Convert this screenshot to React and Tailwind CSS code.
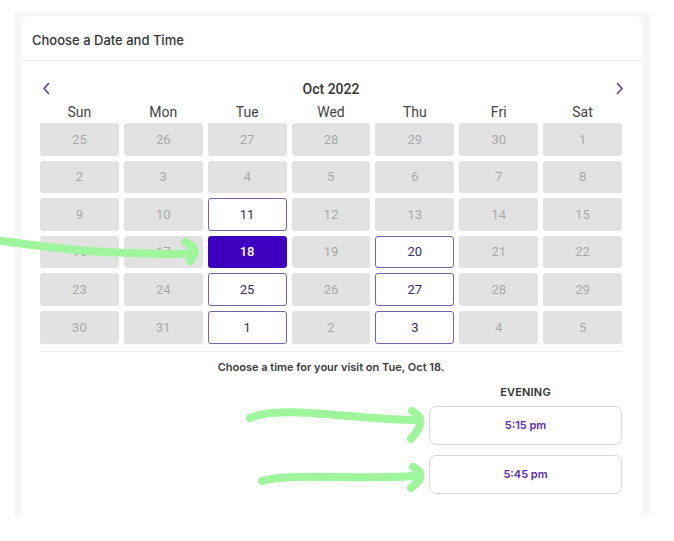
import React from "react";

const rows = [
  [25, 26, 27, 28, 29, 30, 1],
  [2, 3, 4, 5, 6, 7, 8],
  [9, 10, 11, 12, 13, 14, 15],
  [16, 17, 18, 19, 20, 21, 22],
  [23, 24, 25, 26, 27, 28, 29],
  [30, 31, 1, 2, 3, 4, 5],
];
const available = new Set(["2-2", "3-4", "4-2", "4-4", "5-2", "5-4"]);
const selected = "3-2";
const days = ["Sun", "Mon", "Tue", "Wed", "Thu", "Fri", "Sat"];

function Cell({ n, k }) {
  if (k === selected)
    return (
      <div className="h-[32.6px] rounded-[3px] bg-[#3f00c0] text-white flex items-center justify-center text-[13px] font-medium">
        {n}
      </div>
    );
  if (available.has(k))
    return (
      <div className="h-[32.6px] rounded-[3px] bg-white border border-[#7a62a8] text-[#3a2a6a] flex items-center justify-center text-[13px]">
        {n}
      </div>
    );
  return (
    <div className="h-[32.6px] rounded-[3px] bg-[#e2e2e2] text-[#a9a9a9] flex items-center justify-center text-[13px]">
      {n}
    </div>
  );
}

export default function App() {
  return (
    <div className="relative w-[674px] h-[541px] bg-white overflow-hidden" style={{ fontFamily: "Roboto, 'Liberation Sans', sans-serif" }}>
      <div className="ml-[15px] mt-[13px] w-[635px] h-[502px] bg-[#f6f6f6] pl-[6px] pr-[8px] pt-[3px]">
        <div className="bg-white h-full rounded-t-[8px]">
          <div className="h-[45px] flex items-center pt-[5px] px-[11px] border-b border-[#ececec]">
            <span className="text-[13px] font-medium text-[#333]" style={{ fontFamily: "Inter, sans-serif" }}>
              Choose a Date and Time
            </span>
          </div>
          <div className="pl-[19px] pr-[20px] pt-[19px]">
            <div className="relative h-[18px] flex items-center justify-center">
              <svg className="absolute left-[2px] top-[2px]" width="9" height="13" viewBox="0 0 9 13">
                <path d="M6.5 1.5 L2 6.5 L6.5 11.5" fill="none" stroke="#5a3f96" strokeWidth="1.6" strokeLinecap="round" strokeLinejoin="round" />
              </svg>
              <span className="text-[14px] font-medium text-[#333]">Oct 2022</span>
              <svg className="absolute right-[-2px] top-[2px]" width="9" height="13" viewBox="0 0 9 13">
                <path d="M2.5 1.5 L7 6.5 L2.5 11.5" fill="none" stroke="#5a3f96" strokeWidth="1.6" strokeLinecap="round" strokeLinejoin="round" />
              </svg>
            </div>
            <div className="grid grid-cols-7 gap-x-[5px] mt-[5px] h-[18px]">
              {days.map((d) => (
                <div key={d} className="text-center text-[14px] text-[#444] leading-[18px]">
                  {d}
                </div>
              ))}
            </div>
            <div className="grid grid-cols-7 gap-x-[5px] gap-y-[5px] mt-[2px]">
              {rows.map((r, ri) =>
                r.map((n, ci) => <Cell key={ri + "-" + ci} n={n} k={ri + "-" + ci} />)
              )}
            </div>
            <div className="mt-[7px] border-t border-[#ececec]" />
            <div className="mt-[7px] text-center text-[11px] font-semibold text-[#3a3a3a] leading-[16px]" style={{ fontFamily: "Inter, sans-serif" }}>
              Choose a time for your visit on Tue, Oct 18.
            </div>
            <div className="flex justify-end mt-[9px]" style={{ fontFamily: "Inter, sans-serif" }}>
              <div className="w-[193px] flex flex-col">
                <div className="text-center text-[11px] font-semibold text-[#333] leading-[16px] tracking-[0.2px]">EVENING</div>
                <div className="mt-[6px] h-[39px] rounded-[7px] border border-[#d9d6e2] flex items-center justify-center text-[11px] font-semibold text-[#5a2db0]">
                  5:15 pm
                </div>
                <div className="mt-[10px] h-[39px] rounded-[7px] border border-[#d9d6e2] flex items-center justify-center text-[11px] font-semibold text-[#5a2db0]">
                  5:45 pm
                </div>
              </div>
            </div>
          </div>
        </div>
      </div>
      <svg className="absolute left-0 top-0 pointer-events-none" width="674" height="541" viewBox="0 0 674 541">
        <g fill="none" stroke="#9ef59b" strokeWidth="8" strokeLinecap="round" strokeLinejoin="round">
          <path d="M-5 240 C 40 246, 80 252, 130 253 S 180 255, 195 252" />
          <path d="M185 242 Q 201 248 190 261" />
          <path d="M250 418 C 262 413, 280 411, 310 413 S 390 420, 418 420" />
          <path d="M412 411 Q 429 419 411 439" />
          <path d="M262 481 C 275 477, 300 476, 340 477 S 400 477, 418 476" />
          <path d="M413 467 Q 429 474 411 488" />
        </g>
      </svg>
    </div>
  );
}
